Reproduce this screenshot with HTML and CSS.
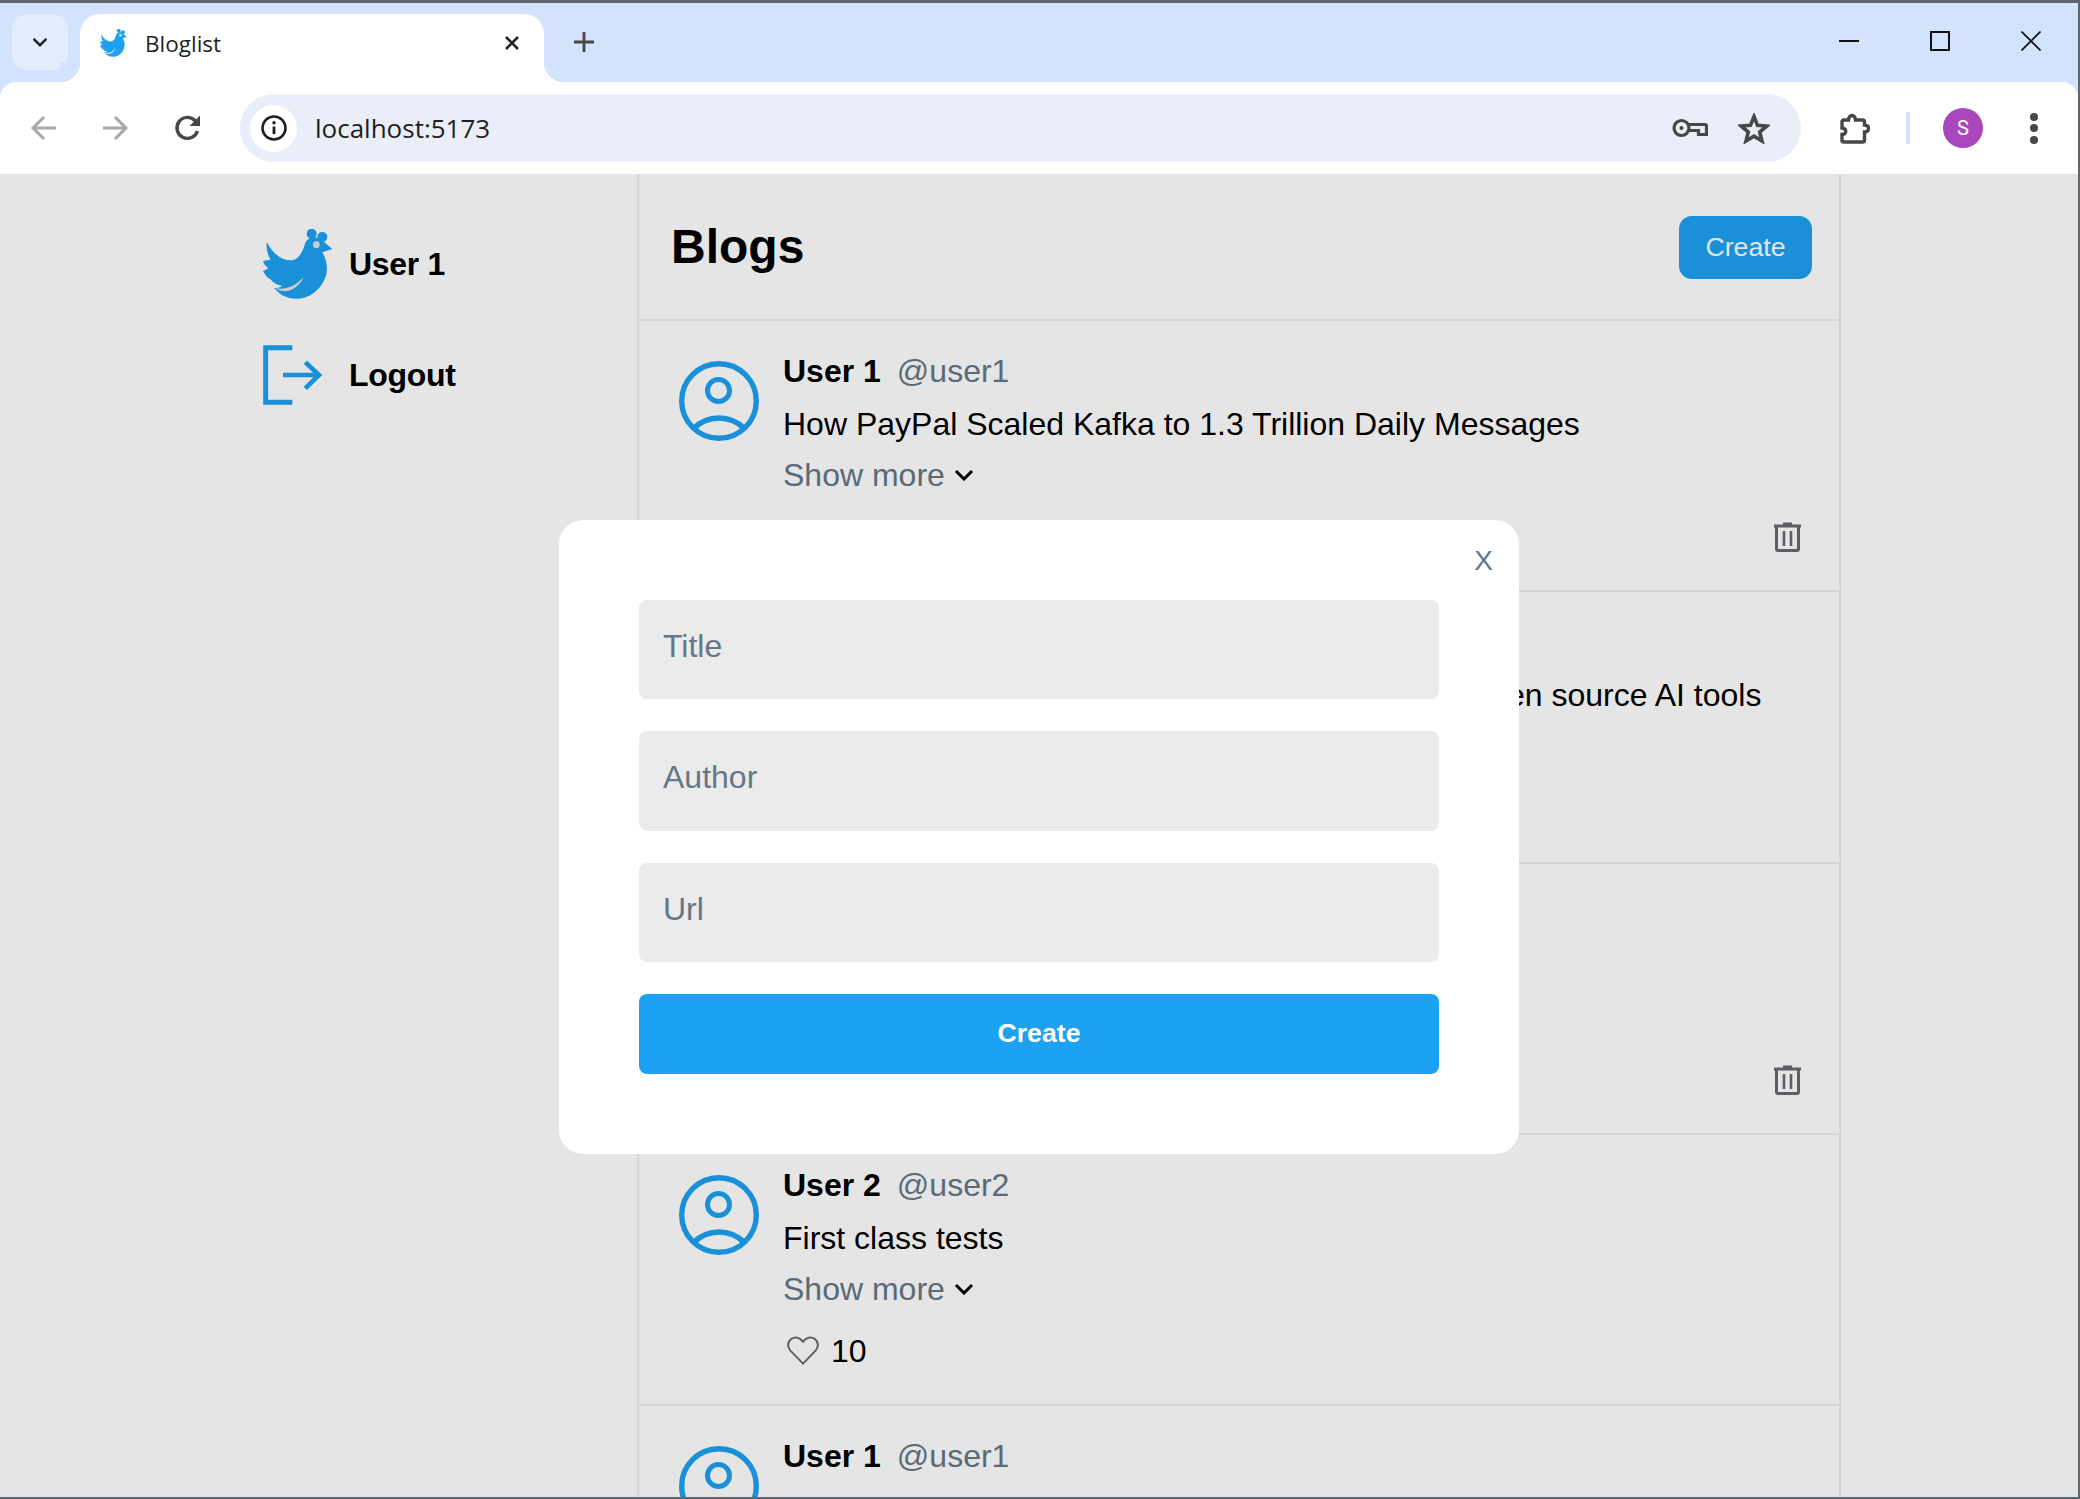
FILE: index.html
```html
<!DOCTYPE html>
<html lang="en">
<head>
    <meta charset="UTF-8">
    <meta name="viewport" content="width=device-width, initial-scale=1.0">
    <title>Bloglist</title>
    <link rel="stylesheet" href="styles.css">
</head>
<body>
    <svg class="defs" width="0" height="0">
        <symbol id="hen" viewBox="70 88 210 210" preserveAspectRatio="none">
            <circle cx="216" cy="102" r="15" fill="currentColor"/>
            <circle cx="248" cy="112" r="15" fill="currentColor"/>
            <path fill="currentColor" d="M82 128C96 158 122 180 150 182C174 184 188 160 196 132C202 110 236 106 250 124L278 148L248 158C262 182 268 212 254 240C238 276 204 297 172 297C140 297 118 284 104 265C112 266 122 262 128 258C112 256 100 248 94 240C84 236 76 226 70 214L86 206C78 200 72 192 70 184L92 180C84 164 78 146 82 128Z"/>
            <circle cx="230" cy="135" r="10" fill="#e5e5e5"/>
            <path fill="#e5e5e5" d="M108 266C136 272 170 258 192 232C178 266 136 288 108 266Z"/>
        </symbol>
        <symbol id="avatar" viewBox="0 0 80 80">
            <circle cx="40" cy="40" r="37.3" fill="none" stroke="currentColor" stroke-width="5.4"/>
            <circle cx="39.5" cy="29.5" r="11" fill="none" stroke="currentColor" stroke-width="5"/>
            <path d="M14 68C22 60 31 57 40 57C49 57 58 60 66 68" fill="none" stroke="currentColor" stroke-width="5.4"/>
        </symbol>
        <symbol id="trash" viewBox="0 0 27 30">
            <path d="M0 4H27M9 2H18" fill="none" stroke="currentColor" stroke-width="3"/>
            <path d="M2.5 4V27C2.5 28 3 28.500 4 28.500H23C24 28.500 24.500 28 24.500 27V4" fill="none" stroke="currentColor" stroke-width="3"/>
            <path d="M10 9V24M17 9V24" fill="none" stroke="currentColor" stroke-width="2.6"/>
        </symbol>
        <symbol id="chevron" viewBox="0 0 20 12">
            <path d="M2 2L10 10L18 2" fill="none" stroke="currentColor" stroke-width="3"/>
        </symbol>
        <symbol id="heart" viewBox="0 0 32 29">
            <path d="M16 27.6L3.4 14.6C-0.2 10.6 0.8 5.2 4.4 2.8C8 0.4 12.8 1.2 16 5.6C19.2 1.2 24 0.4 27.6 2.8C31.2 5.2 32.2 10.6 28.6 14.6Z" fill="none" stroke="currentColor" stroke-width="2"/>
        </symbol>
    </svg>

    <div class="window">
        <div class="tabstrip">
            <div class="tab-search">
                <svg class="tab-search-icon" width="16" height="10"><use href="#chevron"/></svg>
            </div>
            <div class="tab">
                <svg class="tab-favicon" width="27" height="28"><use href="#hen"/></svg>
                <span class="tab-title">Bloglist</span>
                <svg class="tab-close" width="16" height="16" viewBox="0 0 16 16"><path d="M2 2L14 14M14 2L2 14" stroke="#1f1f1f" stroke-width="2.6"/></svg>
            </div>
            <svg class="new-tab" width="22" height="22" viewBox="0 0 22 22"><path d="M11 1V21M1 11H21" stroke="#474747" stroke-width="2.8"/></svg>
            <div class="window-controls">
                <svg width="20" height="20" viewBox="0 0 20 20"><path d="M0 10H20" stroke="#111" stroke-width="2"/></svg>
                <svg width="20" height="20" viewBox="0 0 20 20"><rect x="1" y="1" width="18" height="18" fill="none" stroke="#111" stroke-width="2"/></svg>
                <svg width="20" height="20" viewBox="0 0 20 20"><path d="M0.5 0.5L19.5 19.5M19.5 0.5L0.5 19.5" stroke="#111" stroke-width="1.7"/></svg>
            </div>
        </div>

        <div class="toolbar">
            <svg class="nav-icon" width="28" height="26" viewBox="0 0 28 26"><path d="M26 13H4M14 2L3 13L14 24" fill="none" stroke="#a8a8a8" stroke-width="3"/></svg>
            <svg class="nav-icon" width="28" height="26" viewBox="0 0 28 26"><path d="M2 13H24M14 2L25 13L14 24" fill="none" stroke="#a8a8a8" stroke-width="3"/></svg>
            <svg class="nav-icon" width="28" height="28" viewBox="0 0 28 28"><path d="M23.5 17A10.5 10.5 0 1 1 21 6.5L25 10" fill="none" stroke="#474747" stroke-width="3.4"/><path d="M26 1.5V12H15.5Z" fill="#474747"/></svg>
            <div class="omnibox">
                <div class="site-info">
                    <svg width="26" height="26" viewBox="0 0 26 26"><circle cx="13" cy="13" r="11.5" fill="none" stroke="#1f1f1f" stroke-width="2.6"/><path d="M13 11.5V19" stroke="#1f1f1f" stroke-width="2.8"/><circle cx="13" cy="7.7" r="1.7" fill="#1f1f1f"/></svg>
                </div>
                <span class="url">localhost:5173</span>
                <svg class="key" width="36" height="20" viewBox="0 0 36 20"><circle cx="9.5" cy="10" r="7.5" fill="none" stroke="#474747" stroke-width="3.2"/><circle cx="9.5" cy="10" r="2" fill="#474747"/><path d="M17 6.5H33C34.5 6.5 34.5 7 34.5 8V16.5H26.5V12.5H17" fill="none" stroke="#474747" stroke-width="3.2"/></svg>
                <svg class="star" width="32" height="31" viewBox="0 0 32 31"><path d="M16 3.5L19.5 12.3L29 13L21.7 19L24 28L16 23.2L8 28L10.3 19L3 13L12.5 12.3Z" fill="none" stroke="#474747" stroke-width="3.6"/></svg>
            </div>
            <svg class="puzzle" width="32" height="32" viewBox="0 0 32 32"><path d="M6 8H10.5C10.5 2 17.5 2 17.5 8H24.5C26 8 26.5 8.5 26.5 10V13C32 13 32 20 26.5 20V28.5C26.5 29.5 26 30 24.5 30H6C4.5 30 4 29.5 4 28.5V22.5C9 22.5 9 16 4 16V10C4 8.5 4.5 8 6 8Z" fill="none" stroke="#474747" stroke-width="3.4"/></svg>
            <div class="toolbar-sep"></div>
            <div class="profile">S</div>
            <div class="kebab"><i></i><i></i><i></i></div>
        </div>

        <div class="page">
            <nav class="sidebar">
                <a class="side-item side-user">
                    <svg class="side-hen" width="70" height="70"><use href="#hen"/></svg>
                    <span>User 1</span>
                </a>
                <a class="side-item side-logout">
                    <svg class="side-logout-icon" width="60" height="60" viewBox="70 438 180 180"><path d="M158 446H78V610H158" fill="none" stroke="currentColor" stroke-width="15"/><path d="M130 528H236M197 490L238 528L197 568" fill="none" stroke="currentColor" stroke-width="14"/></svg>
                    <span>Logout</span>
                </a>
            </nav>

            <main class="feed">
                <header class="feed-header">
                    <h1>Blogs</h1>
                    <button class="btn-new">Create</button>
                </header>

                <article class="post">
                    <svg class="post-avatar" width="80" height="80"><use href="#avatar"/></svg>
                    <div class="post-body">
                        <div class="post-author"><b>User 1</b><span class="handle">@user1</span></div>
                        <div class="post-title">How PayPal Scaled Kafka to 1.3 Trillion Daily Messages</div>
                        <div class="show-more">Show more <svg width="20" height="12"><use href="#chevron"/></svg></div>
                        <div class="post-foot">
                            <div class="likes"><svg width="32" height="29"><use href="#heart"/></svg>25</div>
                            <svg class="trash" width="27" height="30"><use href="#trash"/></svg>
                        </div>
                    </div>
                </article>

                <article class="post">
                    <svg class="post-avatar" width="80" height="80"><use href="#avatar"/></svg>
                    <div class="post-body">
                        <div class="post-author"><b>User 2</b><span class="handle">@user2</span></div>
                        <div class="post-title">The 5 best free, ready to use and easy to set up open source AI tools</div>
                        <div class="show-more">Show more <svg width="20" height="12"><use href="#chevron"/></svg></div>
                        <div class="post-foot">
                            <div class="likes"><svg width="32" height="29"><use href="#heart"/></svg>14</div>
                        </div>
                    </div>
                </article>

                <article class="post">
                    <svg class="post-avatar" width="80" height="80"><use href="#avatar"/></svg>
                    <div class="post-body">
                        <div class="post-author"><b>User 1</b><span class="handle">@user1</span></div>
                        <div class="post-title">Type wars</div>
                        <div class="show-more">Show more <svg width="20" height="12"><use href="#chevron"/></svg></div>
                        <div class="post-foot">
                            <div class="likes"><svg width="32" height="29"><use href="#heart"/></svg>12</div>
                            <svg class="trash" width="27" height="30"><use href="#trash"/></svg>
                        </div>
                    </div>
                </article>

                <article class="post">
                    <svg class="post-avatar" width="80" height="80"><use href="#avatar"/></svg>
                    <div class="post-body">
                        <div class="post-author"><b>User 2</b><span class="handle">@user2</span></div>
                        <div class="post-title">First class tests</div>
                        <div class="show-more">Show more <svg width="20" height="12"><use href="#chevron"/></svg></div>
                        <div class="post-foot">
                            <div class="likes"><svg width="32" height="29"><use href="#heart"/></svg>10</div>
                        </div>
                    </div>
                </article>

                <article class="post">
                    <svg class="post-avatar" width="80" height="80"><use href="#avatar"/></svg>
                    <div class="post-body">
                        <div class="post-author"><b>User 1</b><span class="handle">@user1</span></div>
                        <div class="post-title">Functional programming</div>
                    </div>
                </article>
            </main>

            <div class="overlay">
                <form class="modal">
                    <button class="modal-close" type="button">X</button>
                    <input class="field" type="text" placeholder="Title">
                    <input class="field" type="text" placeholder="Author">
                    <input class="field" type="text" placeholder="Url">
                    <button class="btn-submit" type="button">Create</button>
                </form>
            </div>
        </div>
    </div>
</body>
</html>
```

FILE: styles.css
```css
* {
    box-sizing: border-box;
}
html, body {
    margin: 0;
    height: 100%;
    overflow: hidden;
}
body {
    font-family: "Liberation Sans", Arial, sans-serif;
    color: #000;
}
.defs {
    position: absolute;
}
.window {
    height: 1499px;
    display: flex;
    flex-direction: column;
    border-top: 3px solid #5f6670;
    border-right: 2px solid #5f6670;
    border-bottom: 2px solid #5f6670;
    background: #d3e3fd;
    overflow: hidden;
}

/* tab strip */
.tabstrip {
    height: 79px;
    flex: none;
    display: flex;
    align-items: flex-start;
    padding-top: 11px;
    padding-left: 12px;
}
.tab-search {
    width: 56px;
    height: 56px;
    background: #e4edfd;
    border-radius: 16px;
    display: flex;
    align-items: center;
    justify-content: center;
    color: #1f1f1f;
}
.tab {
    width: 464px;
    height: 68px;
    margin-left: 12px;
    background: #fff;
    border-radius: 20px 20px 0 0;
    display: flex;
    align-items: center;
    padding: 0 24px 10px 20px;
    position: relative;
}
.tab::before, .tab::after {
    content: "";
    position: absolute;
    bottom: 0;
    width: 20px;
    height: 20px;
}
.tab::before {
    left: -20px;
    background: radial-gradient(circle at 0 0, #d3e3fd 20px, #fff 20.5px);
}
.tab::after {
    right: -20px;
    background: radial-gradient(circle at 100% 0, #d3e3fd 20px, #fff 20.5px);
}
.tab-favicon {
    color: #1da1f2;
}
.tab-title {
    margin-left: 18px;
    flex: 1;
    font-family: "Open Sans", sans-serif;
    font-size: 22.5px;
    color: #1f1f1f;
}
.new-tab {
    margin: 17px 0 0 29px;
}
.window-controls {
    margin-left: auto;
    display: flex;
    gap: 71px;
    padding: 17px 37px 0 0;
}

/* toolbar */
.toolbar {
    height: 92px;
    flex: none;
    background: #fff;
    border-radius: 16px 16px 0 0;
    display: flex;
    align-items: center;
    padding-left: 30px;
}
.nav-icon {
    margin-right: 43px;
}
.nav-icon:nth-child(2) {
    margin-right: 45px;
}
.nav-icon:nth-child(3) {
    margin-right: 38px;
}
.omnibox {
    width: 1561px;
    height: 68px;
    background: #e9eef8;
    border-radius: 34px;
    display: flex;
    align-items: center;
    padding: 0 31px 0 10px;
}
.site-info {
    width: 47px;
    height: 47px;
    border-radius: 50%;
    background: #fff;
    display: flex;
    align-items: center;
    justify-content: center;
}
.url {
    margin-left: 18px;
    flex: 1;
    font-family: "Open Sans", sans-serif;
    font-size: 26px;
    color: #1f1f1f;
}
.key {
    margin-right: 30px;
}
.puzzle {
    margin-left: 37px;
}
.toolbar-sep {
    width: 4px;
    height: 32px;
    margin-left: 36px;
    background: #d3e3fd;
}
.profile {
    width: 40px;
    height: 40px;
    margin-left: 33px;
    border-radius: 50%;
    background: #ab47bc;
    color: #fff;
    font-family: Roboto, sans-serif;
    font-size: 20px;
    display: flex;
    align-items: center;
    justify-content: center;
}
.kebab {
    margin-left: 47px;
    display: flex;
    flex-direction: column;
    gap: 3.5px;
}
.kebab i {
    width: 8px;
    height: 8px;
    border-radius: 50%;
    background: #474747;
}

/* page */
.page {
    flex: 1;
    min-height: 0;
    background: #fff;
    display: flex;
    position: relative;
    overflow: hidden;
}
.sidebar {
    width: 637px;
    flex: none;
    padding: 55px 0 0 263px;
    display: flex;
    flex-direction: column;
    gap: 46px;
}
.side-item {
    display: flex;
    align-items: center;
    gap: 16px;
    font-size: 32px;
    font-weight: bold;
    letter-spacing: -0.3px;
    color: #000;
}
.side-hen, .side-logout-icon {
    color: #1da1f2;
}
.side-logout {
    gap: 26px;
}
.feed {
    width: 1204px;
    flex: none;
    border-left: 2px solid #eee;
    border-right: 2px solid #eee;
}
.feed-header {
    height: 147px;
    border-bottom: 2px solid #eee;
    display: flex;
    align-items: center;
    justify-content: space-between;
    padding: 0 27px 0 32px;
}
.feed-header h1 {
    margin: 0;
    font-size: 48px;
    line-height: 1;
}
.btn-new {
    width: 133px;
    height: 63px;
    margin-top: 2px;
    border: none;
    border-radius: 13px;
    background: #1da1f2;
    color: #fff;
    font-family: inherit;
    font-size: 26.67px;
}

/* posts */
.post {
    height: 271.3px;
    border-bottom: 2px solid #eee;
    display: flex;
    padding: 24px 38px 0 40px;
}
.post-avatar {
    flex: none;
    margin-top: 16px;
    color: #1da1f2;
}
.post-body {
    flex: 1;
    margin-left: 24px;
    font-size: 32px;
    line-height: 52px;
    white-space: nowrap;
}
.handle {
    margin-left: 16px;
    color: #657786;
}
.post-title {
    margin-top: 1px;
}
.show-more {
    margin-top: -1px;
    color: #657786;
}
.show-more svg {
    vertical-align: 5px;
    color: #000;
}
.post-foot {
    display: flex;
    align-items: center;
    justify-content: space-between;
    margin-top: 10px;
    height: 52px;
}
.likes {
    display: flex;
    align-items: center;
    gap: 12px;
    color: #000;
}
.likes svg {
    margin-left: 4px;
    color: #6b6b6b;
}
.trash {
    color: #666a70;
}

/* modal */
.overlay {
    position: absolute;
    inset: 0;
    padding-top: 3px;
    background: rgba(0, 0, 0, 0.1);
    display: flex;
    align-items: center;
    justify-content: center;
}
.modal {
    width: 960px;
    height: 634px;
    background: #fff;
    border-radius: 24px;
    padding: 80px;
    display: flex;
    flex-direction: column;
    gap: 32px;
    position: relative;
}
.modal-close {
    position: absolute;
    top: 25px;
    right: 26px;
    border: none;
    background: none;
    padding: 0;
    font-family: inherit;
    font-size: 28px;
    color: #657786;
}
.field {
    height: 99.33px;
    flex: none;
    border: none;
    border-radius: 8px;
    background: #ebebeb;
    padding: 0 24px 6px;
    font-family: inherit;
    font-size: 32px;
}
.field::placeholder {
    color: #657786;
    opacity: 1;
}
.btn-submit {
    height: 80px;
    flex: none;
    border: none;
    border-radius: 8px;
    background: #1da1f2;
    color: #fff;
    font-family: inherit;
    font-size: 26.67px;
    font-weight: bold;
}
```
